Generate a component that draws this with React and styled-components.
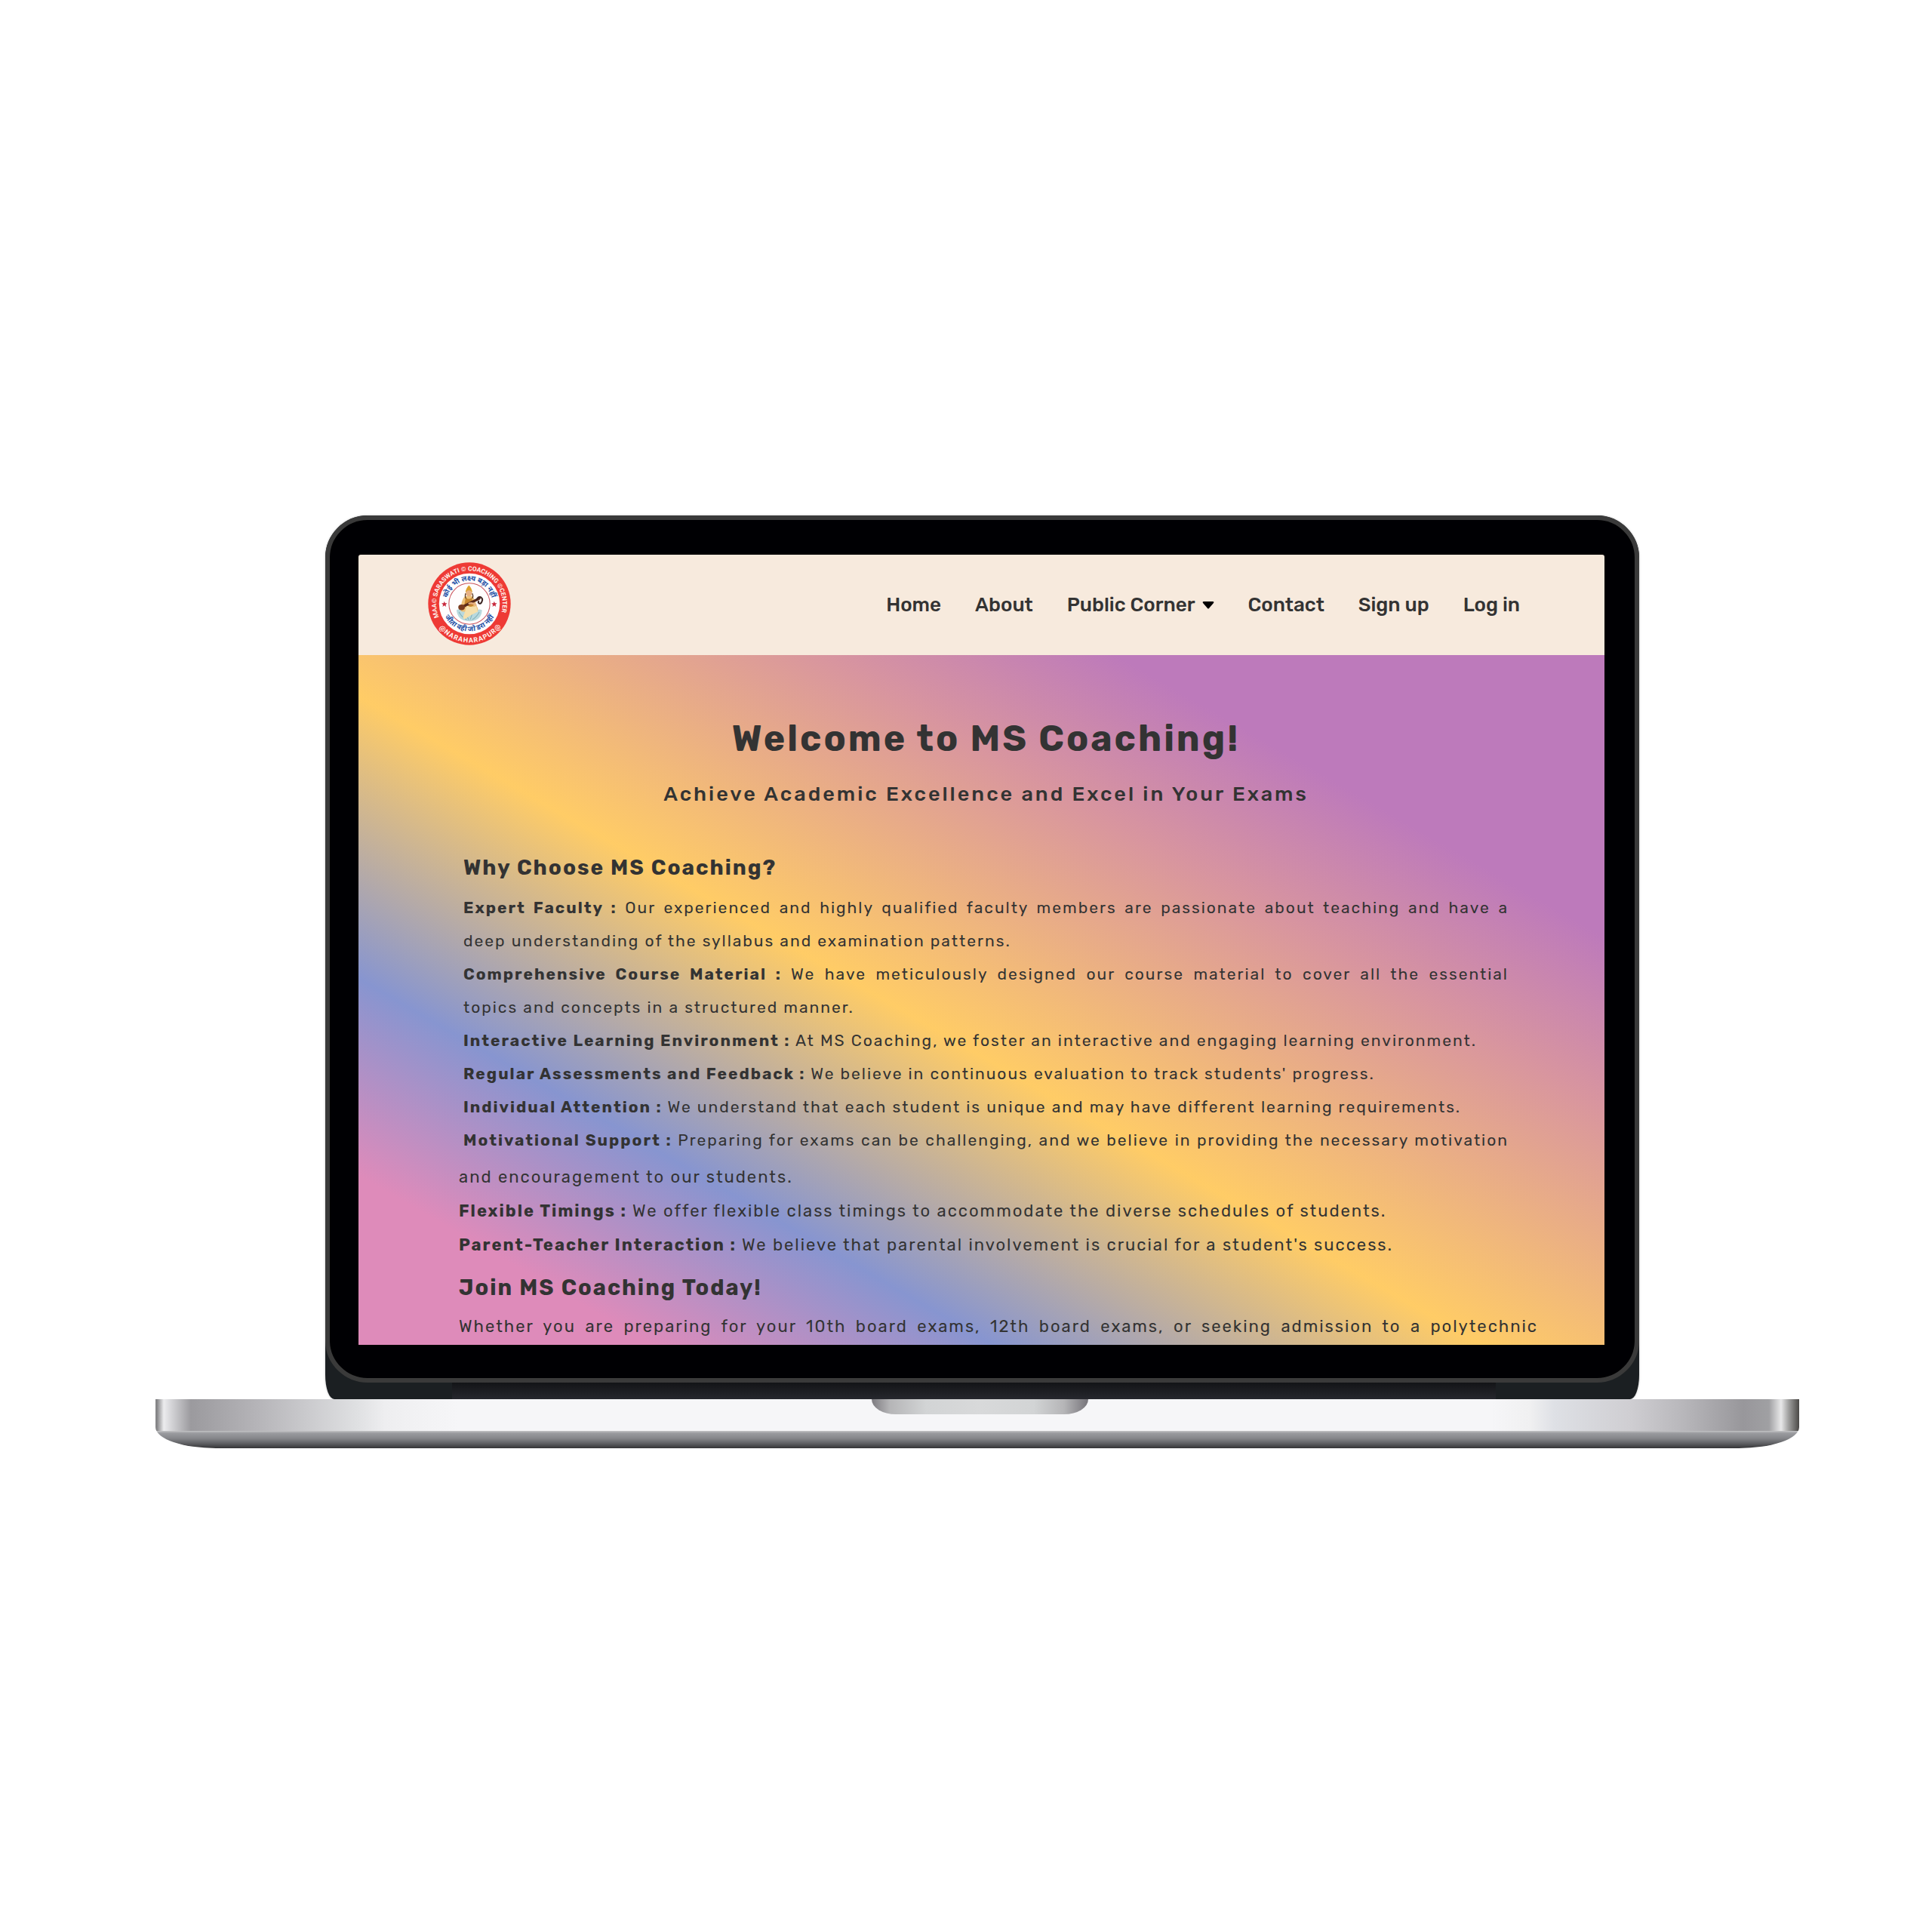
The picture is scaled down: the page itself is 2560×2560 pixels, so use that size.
import React from 'react';
import styled, { createGlobalStyle } from 'styled-components';

const GlobalStyle = createGlobalStyle`
  * { box-sizing: border-box; }
  body {
    margin: 0;
    background: #ffffff;
    color: #333333;
    font-family: Rubik, Roboto, 'Noto Sans', sans-serif;
  }
  h1, h2, p, ul { margin: 0; padding: 0; }
`;

const Stage = styled.div`
  min-height: 100vh;
  padding: 683px 176px 0 206px;
`;

/* ---------- laptop ---------- */

const Hinge = styled.div`
  margin: 0 212px 0 225px;
  background: #1b1f22;
  border-radius: 56px 56px 12px 12px / 56px 56px 32px 32px;
  box-shadow: 0 0 3px rgba(0, 0, 0, 0.25);
`;

const Lid = styled.div`
  background: #000003;
  border: 6px solid #3a3a3a;
  border-radius: 56px;
  padding: 46px 40px 44px 38px;
`;

const HingeStrip = styled.div`
  height: 22px;
  margin: 0 190px 0 168px;
  background: linear-gradient(#131417, #26272d);
`;

const Screen = styled.div`
  height: 1047px;
  display: flex;
  flex-direction: column;
  overflow: hidden;
  border-radius: 3px 3px 0 0;
`;

const Base = styled.div`
  overflow: hidden;
  border-radius: 0 0 80px 80px / 0 0 28px 28px;
`;

const Deck = styled.div`
  height: 42px;
  display: flex;
  justify-content: center;
  padding-left: 6px;
  background: linear-gradient(
    90deg,
    #858587 0,
    #858587 2px,
    #ececee 11px,
    #d2d2d5 22px,
    #9b9a9e 47px,
    #b5b4b8 134px,
    #c9c9cc 197px,
    #dfe0e2 267px,
    #eeeef0 304px,
    #f6f6f8 400px,
    #f6f6f8 calc(100% - 407px),
    #f0f0f1 calc(100% - 357px),
    #dee0e5 calc(100% - 324px),
    #cfced2 calc(100% - 224px),
    #b9b8bc calc(100% - 157px),
    #98979b calc(100% - 74px),
    #a0a0a3 calc(100% - 40px),
    #e8e8e9 calc(100% - 24px),
    #a0a09f calc(100% - 14px),
    #4a4846 100%
  );
`;

const Notch = styled.div`
  width: 287px;
  height: 20px;
  border-radius: 0 0 32px 32px / 0 0 20px 20px;
  background: linear-gradient(
    90deg,
    #7d7b80,
    #b5b5b7 24px,
    #d2d4d5 72px,
    #d8d9da 50%,
    #d2d4d5 calc(100% - 72px),
    #b5b5b7 calc(100% - 32px),
    #76747a
  );
`;

const Underside = styled.div`
  height: 23px;
  background: linear-gradient(#c4c4c6, #9a9b9f 3px, #85868a 10px, #5c5d60 17px, #343436);
`;

/* ---------- site header ---------- */

const Header = styled.header`
  flex: none;
  height: 133px;
  padding: 0 112px 0 92px;
  display: flex;
  align-items: center;
  justify-content: space-between;
  background: #f7eadd;
`;

const LogoLink = styled.a`
  display: block;
  line-height: 0;
  padding-bottom: 4px;
`;

const Nav = styled.nav`
  display: flex;
  align-items: center;
  gap: 45px;
`;

const navText = `
  color: #333333;
  font-size: 26px;
  font-weight: 500;
  line-height: 36px;
`;

const NavLink = styled.a`
  ${navText}
  text-decoration: none;
`;

const NavMenu = styled.button`
  ${navText}
  display: flex;
  align-items: center;
  gap: 9px;
  padding: 0;
  border: 0;
  background: none;
  font-family: inherit;
  cursor: pointer;
`;

/* ---------- page content ---------- */

const Main = styled.main`
  flex: 1;
  min-height: 0;
  overflow: hidden;
  background: linear-gradient(
    30deg,
    #de8bba 12%,
    #8795d0 26%,
    #ffcc66 46%,
    #d8959f 68%,
    #bd7abb 80%
  );
`;

const Intro = styled.section`
  padding: 81px 127px 4px 139px;
`;

const More = styled.section`
  padding: 0 88px 0 133px;
`;

const Title = styled.h1`
  font-size: 48px;
  line-height: 60px;
  font-weight: 700;
  letter-spacing: 3px;
  text-align: center;
`;

const Tagline = styled.p`
  margin-top: 25px;
  font-size: 27px;
  line-height: 36px;
  font-weight: 500;
  letter-spacing: 3px;
  text-align: center;
`;

const Heading = styled.h2`
  margin-top: ${(p) => p.$top}px;
  margin-bottom: ${(p) => p.$bottom}px;
  font-size: ${(p) => p.$size}px;
  line-height: 36px;
  font-weight: 700;
  letter-spacing: 2px;
`;

const Copy = styled.div`
  font-size: ${(p) => p.$size}px;
  line-height: ${(p) => p.$leading}px;
  letter-spacing: 2px;
`;

const Line = styled.p`
  text-align-last: ${(p) => (p.$spread ? 'justify' : 'left')};
`;

const Term = styled.strong`
  font-weight: 700;
`;

function Logo() {
  return (
    <svg width="110" height="110" viewBox="83 43 328 328" role="img" aria-label="Maa Saraswati Coaching Center">
      <defs>
        <path id="ringTop" d="M127 260 A131 131 0 1 1 367 260" />
        <path id="ringBottom" d="M122 295 A153 153 0 0 0 378 287" />
        <path id="mottoTop" d="M158 192 A90 90 0 0 1 336 192" />
        <path id="mottoBottom" d="M139 230 A111 111 0 0 0 355 230" />
      </defs>
      <circle cx="247" cy="207" r="163" fill="#ee3a35" />
      <circle cx="247" cy="207" r="120" fill="#fffdfd" />
      <circle cx="247" cy="207" r="81" fill="none" stroke="#c9545c" strokeWidth="3" />
      <g fontFamily="Roboto, sans-serif" fontWeight="700" fill="#fff4ee">
        <text fontSize="25"><textPath href="#ringTop">MAA© SARASWATI © COACHING ©CENTER</textPath></text>
        <text fontSize="27" letterSpacing="3" textAnchor="middle"><textPath href="#ringBottom" startOffset="50%">@NARAHARAPUR@</textPath></text>
      </g>
      <g fontFamily="'Noto Sans Devanagari', 'Noto Sans', sans-serif" fontWeight="700" fontSize="28" fill="#2350a6" textAnchor="middle">
        <text><textPath href="#mottoTop" startOffset="50%">कोई भी लक्ष्य बड़ा नहीं</textPath></text>
        <text><textPath href="#mottoBottom" startOffset="50%">जीता वही जो डरा नहीं</textPath></text>
      </g>
      {[148, 345].map((x) => (
        <path
          key={x}
          transform={`translate(${x} 209)`}
          fill="#c8283c"
          d="M0 -12 L3 -4 L11 -4 L5 2 L7 10 L0 5 L-7 10 L-5 2 L-11 -4 L-3 -4Z"
        />
      ))}
      <path d="M196 232 q14 -8 24 2 q12 -12 26 -4 q14 -8 26 4 q12 -8 25 -2 q-2 30 -26 40 q-22 8 -48 0 q-24 -10 -27 -40Z" fill="#b9d9de" />
      <path d="M206 240 q10 20 30 30 M232 238 q4 18 12 32 M286 240 q-10 20 -28 30 M260 238 q-4 18 -10 32" stroke="#7fb0b8" strokeWidth="3" fill="none" />
      <path d="M228 178 q-12 16 -14 38 q-6 18 4 22 l58 2 q10 -8 0 -24 q-8 -30 -20 -40Z" fill="#edc27a" />
      <path d="M232 184 q14 8 24 0 l8 30 q-18 12 -38 4Z" fill="#c8872e" />
      <path d="M236 214 q22 10 38 2 l6 22 q-30 14 -52 30 q-10 -4 -4 -14 q8 -20 12 -40Z" fill="#f6e0ac" />
      <path d="M232 162 q0 -14 13 -28 q13 14 13 28Z" fill="#dca22c" />
      <circle cx="245" cy="166" r="12" fill="#e8b284" />
      <path d="M232 166 q-4 14 2 20 M258 166 q6 12 0 20" stroke="#5b3a22" strokeWidth="4" fill="none" />
      <path d="M214 222 L286 186" stroke="#5a2a1a" strokeWidth="10" strokeLinecap="round" />
      <ellipse cx="216" cy="221" rx="13" ry="11" fill="#7a3b1e" />
      <path d="M276 192 q4 -14 16 -11 q10 6 4 18 q-4 10 -11 6 q-6 -4 0 -9" fill="none" stroke="#3a2320" strokeWidth="6" />
      <path d="M246 206 q16 -4 26 6" stroke="#e8b284" strokeWidth="7" strokeLinecap="round" fill="none" />
    </svg>
  );
}

function Caret() {
  return (
    <svg width="16" height="10" viewBox="0 0 16 10" aria-hidden="true">
      <path d="M2 0 H14 Q16 0 15 2 L9 9 Q8 10 7 9 L1 2 Q0 0 2 0Z" fill="#000000" />
    </svg>
  );
}

const REASONS = [
  { term: 'Expert Faculty :', text: 'Our experienced and highly qualified faculty members are passionate about teaching and have a', spread: true },
  { text: 'deep understanding of the syllabus and examination patterns.' },
  { term: 'Comprehensive Course Material :', text: 'We have meticulously designed our course material to cover all the essential', spread: true },
  { text: 'topics and concepts in a structured manner.' },
  { term: 'Interactive Learning Environment :', text: 'At MS Coaching, we foster an interactive and engaging learning environment.' },
  { term: 'Regular Assessments and Feedback :', text: "We believe in continuous evaluation to track students' progress." },
  { term: 'Individual Attention :', text: 'We understand that each student is unique and may have different learning requirements.' },
  { term: 'Motivational Support :', text: 'Preparing for exams can be challenging, and we believe in providing the necessary motivation', spread: true },
];

const MORE_REASONS = [
  { text: 'and encouragement to our students.' },
  { term: 'Flexible Timings :', text: 'We offer flexible class timings to accommodate the diverse schedules of students.' },
  { term: 'Parent-Teacher Interaction :', text: "We believe that parental involvement is crucial for a student's success." },
];

function Lines({ items }) {
  return items.map((item) => (
    <Line key={item.text} $spread={item.spread}>
      {item.term && <Term>{item.term}</Term>}
      {item.term && ' '}
      {item.text}
    </Line>
  ));
}

export default function App() {
  return (
    <>
      <GlobalStyle />
      <Stage>
        <Hinge>
          <Lid>
            <Screen>
              <Header>
                <LogoLink href="#home"><Logo /></LogoLink>
                <Nav>
                  <NavLink href="#home">Home</NavLink>
                  <NavLink href="#about">About</NavLink>
                  <NavMenu type="button">Public Corner<Caret /></NavMenu>
                  <NavLink href="#contact">Contact</NavLink>
                  <NavLink href="#signup">Sign up</NavLink>
                  <NavLink href="#login">Log in</NavLink>
                </Nav>
              </Header>
              <Main>
                <Intro>
                  <Title>Welcome to MS Coaching!</Title>
                  <Tagline>Achieve Academic Excellence and Excel in Your Exams</Tagline>
                  <Heading $size={28} $top={62} $bottom={13}>Why Choose MS Coaching?</Heading>
                  <Copy $size={21} $leading={44}><Lines items={REASONS} /></Copy>
                </Intro>
                <More>
                  <Copy $size={22} $leading={45}><Lines items={MORE_REASONS} /></Copy>
                  <Heading $size={29} $top={16} $bottom={11}>Join MS Coaching Today!</Heading>
                  <Copy $size={22} $leading={45}>
                    <Line $spread>
                      Whether you are preparing for your 10th board exams, 12th board exams, or seeking admission to a polytechnic
                    </Line>
                  </Copy>
                </More>
              </Main>
            </Screen>
          </Lid>
          <HingeStrip />
        </Hinge>
        <Base>
          <Deck><Notch /></Deck>
          <Underside />
        </Base>
      </Stage>
    </>
  );
}
